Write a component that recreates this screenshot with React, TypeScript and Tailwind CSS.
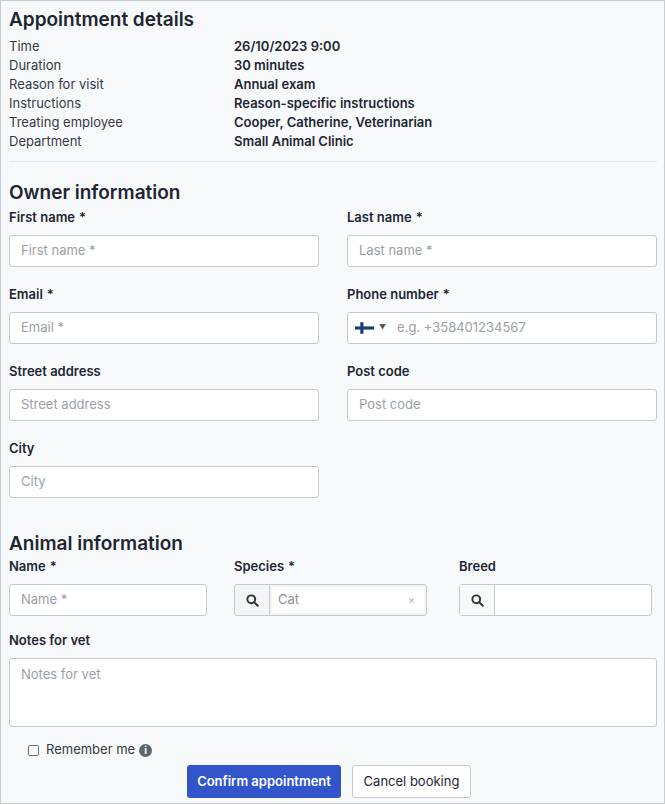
import React from "react";

const Label = ({ t, req }: { t: string; req?: boolean }) => (
  <div className="text-[13px] font-semibold text-[#1e2533] h-[15px] leading-[15px] mb-[10px]">
    {t}
    {req && <span className="ml-1">*</span>}
  </div>
);

const Input = ({ ph }: { ph: string }) => (
  <div className="h-[32px] bg-white border border-[#c4c8cf] rounded-[3px] px-[11px] flex items-center text-[13px] text-[#9aa0a8]">
    {ph}
  </div>
);

const Search = () => (
  <svg width="13" height="13" viewBox="0 0 16 16" fill="none" stroke="#333" strokeWidth="2.4">
    <circle cx="6.5" cy="6.5" r="4.8" />
    <path d="M10 10l4.5 4.5" strokeLinecap="round" />
  </svg>
);

export default function App() {
  const rows = [
    ["Time", "26/10/2023 9:00"],
    ["Duration", "30 minutes"],
    ["Reason for visit", "Annual exam"],
    ["Instructions", "Reason-specific instructions"],
    ["Treating employee", "Cooper, Catherine, Veterinarian"],
    ["Department", "Small Animal Clinic"],
  ];
  return (
    <div
      className="w-[665px] h-[804px] bg-[#f8f9fa] border border-[#c9ccd1] text-[#1e2533] pl-[8px] pr-[7px]"
      style={{ fontFamily: "Inter, 'Noto Sans', sans-serif" }}
    >
      <h1 className="text-[19px] font-semibold mt-[7px] leading-[24px]">Appointment details</h1>
      <div className="mt-[5px]">
        {rows.map(([a, b]) => (
          <div key={a} className="flex h-[19px] items-center text-[13px]">
            <div className="w-[225px] text-[#333a45]">{a}</div>
            <div className="font-semibold">{b}</div>
          </div>
        ))}
      </div>
      <div className="border-t border-[#e4e6e9] mt-[10px]" />
      <h2 className="text-[19px] font-semibold mt-[19px] leading-[24px]">Owner information</h2>
      <div className="grid grid-cols-2 gap-x-[28px] gap-y-[20px] mt-[5px]">
        <div><Label t="First name" req /><Input ph="First name *" /></div>
        <div><Label t="Last name" req /><Input ph="Last name *" /></div>
        <div><Label t="Email" req /><Input ph="Email *" /></div>
        <div>
          <Label t="Phone number" req />
          <div className="h-[32px] bg-white border border-[#c4c8cf] rounded-[3px] flex items-center text-[13px] text-[#9aa0a8]">
            <svg width="19" height="12" viewBox="0 0 18 11" className="ml-[7px]">
              <rect width="18" height="11" fill="#fff" />
              <rect x="5" width="3" height="11" fill="#1a3d7c" />
              <rect y="4" width="18" height="3" fill="#1a3d7c" />
            </svg>
            <span className="text-[7px] text-[#555] ml-[5px]">▼</span>
            <span className="ml-[11px]">e.g. +358401234567</span>
          </div>
        </div>
        <div><Label t="Street address" /><Input ph="Street address" /></div>
        <div><Label t="Post code" /><Input ph="Post code" /></div>
        <div><Label t="City" /><Input ph="City" /></div>
      </div>
      <h2 className="text-[19px] font-semibold mt-[34px] leading-[24px]">Animal information</h2>
      <div className="flex mt-[3px]">
        <div className="w-[198px]"><Label t="Name" req /><Input ph="Name *" /></div>
        <div className="w-[193px] ml-[27px]">
          <Label t="Species" req />
          <div className="h-[32px] flex border border-[#c4c8cf] rounded-[3px] bg-[#f3f4f5]">
            <div className="w-[35px] flex items-center justify-center border-r border-[#c4c8cf]"><Search /></div>
            <div className="flex-1 m-[2px] bg-white flex items-center px-[6px] text-[13px] text-[#8a9099]">
              <span className="flex-1">Cat</span>
              <span className="text-[11px] text-[#b0b4ba] mr-[3px]">×</span>
            </div>
          </div>
        </div>
        <div className="w-[193px] ml-[32px]">
          <Label t="Breed" />
          <div className="h-[32px] flex border border-[#c4c8cf] rounded-[3px] bg-white">
            <div className="w-[35px] flex items-center justify-center border-r border-[#c4c8cf] bg-[#f8f9fa]"><Search /></div>
            <div className="flex-1" />
          </div>
        </div>
      </div>
      <div className="mt-[17px]">
        <Label t="Notes for vet" />
        <div className="h-[69px] bg-white border border-[#c4c8cf] rounded-[3px] px-[11px] pt-[6px] text-[13px] text-[#9aa0a8]">Notes for vet</div>
      </div>
      <div className="flex items-center mt-[14px] ml-[19px] text-[13px] text-[#333a45] h-[18px]">
        <span className="w-[11px] h-[11px] border border-[#6b7078] rounded-[2px] bg-white" />
        <span className="ml-[7px]">Remember me</span>
        <span className="ml-[4px] w-[13px] h-[13px] rounded-full bg-[#5c6670] text-white text-[10px] font-bold flex items-center justify-center leading-none">i</span>
      </div>
      <div className="flex justify-center gap-[11px] mt-[6px] pr-[8px]">
        <button className="h-[33px] w-[154px] bg-[#3355cc] rounded-[3px] text-white text-[13px] font-semibold">Confirm appointment</button>
        <button className="h-[33px] w-[119px] bg-white border border-[#c4c8cf] rounded-[3px] text-[13px] text-[#1e2533]">Cancel booking</button>
      </div>
    </div>
  );
}
